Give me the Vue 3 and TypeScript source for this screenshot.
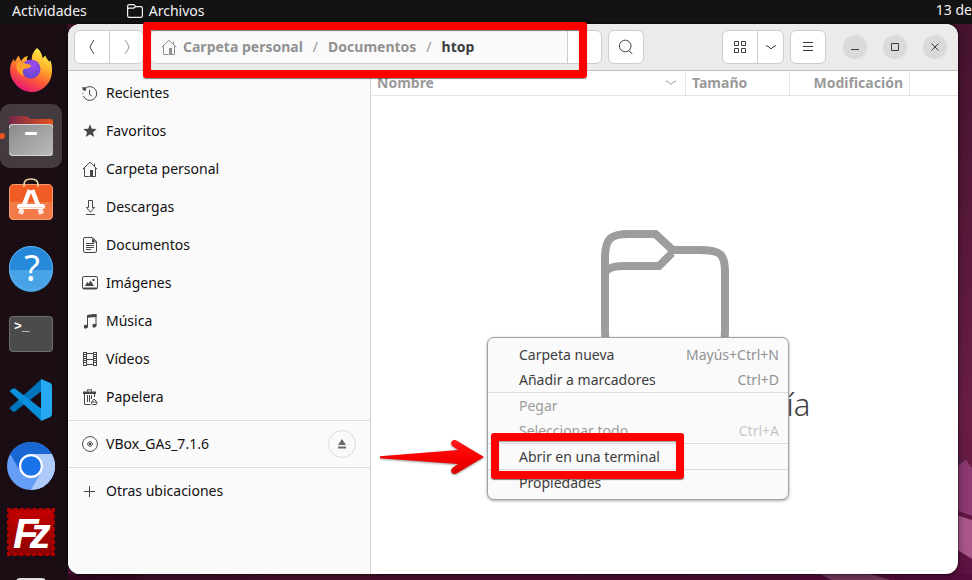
<script setup lang="ts">
interface Glyph {
  stroke?: string
  fill?: string
}

interface Place {
  label: string
  icon: string
  ejectable?: boolean
}

interface MenuEntry {
  label: string
  shortcut?: string
  disabled?: boolean
}

const homeGlyph: Glyph = {
  stroke: 'M.7 8.3 8 1.2l7.3 7.1M2.5 7v8.5h5M13.5 7v8.5h-3M12.5 5V2.5',
  fill: 'M8 9h3v7H8z',
}

const glyphs: Record<string, Glyph> = {
  recent: {
    stroke: 'M3.2 3.4A6.9 6.9 0 1 1 1.4 11M1 8.2v.9M7.5 4.8V9l2.2 2.2',
    fill: 'M.3 2l4.2.6L3.3 6.2.8 5z',
  },
  star: { fill: 'M8 1.3l1.8 4.5 4.9.3-3.8 3.1 1.3 4.8L8 11.3 3.8 14l1.3-4.8L1.3 6.1l4.9-.3z' },
  home: homeGlyph,
  download: { stroke: 'M6.5 1.5h4v7h2.1L8.5 13.2 4.4 8.5h2.1zM4 15.5h9' },
  document: {
    stroke: 'M3 .5h7.5l4 4V14q0 1.5-1.5 1.5H3q-1.5 0-1.5-1.5V2Q1.5.5 3 .5zM4 6.5h8M4 8.5h8M4 10.5h8M4 12.5h5',
    fill: 'M10 1l4.5 4.5H10z',
  },
  image: {
    stroke: 'M2 1.5h12q1.5 0 1.5 1.5v9.5q0 1.5-1.5 1.5H2q-1.5 0-1.5-1.5V3Q.5 1.5 2 1.5z',
    fill: 'M3 11l2.2-4 1.5 1.5L8.5 5.5 12 11zM10.5 4h2v2h-2zM1 12.5h14V14H1z',
  },
  music: {
    stroke: 'M5.5 13V2.5l8.5-1V12',
    fill: 'M5 2l9.5-1v3L5 4.8zM2 12.3q2-1.3 4 0v2q-2 2.3-4 .8zM10.5 11.3q2-1.3 4 0v2q-2 2.3-4 .8z',
  },
  video: {
    stroke: 'M1.5 1v14M14.5 1v14M4.5 1v14M11.5 1v14M4.5 2.5h7M4.5 8.5h7M4.5 13.5h7M1.5 1.5h3M1.5 3.5h3M1.5 5.5h3M1.5 7.5h3M1.5 9.5h3M1.5 11.5h3M1.5 14.5h3M11.5 1.5h3M11.5 3.5h3M11.5 5.5h3M11.5 7.5h3M11.5 9.5h3M11.5 11.5h3M11.5 14.5h3',
  },
  trash: {
    stroke: 'M2.5 5v10.5h6M12.5 5v3M5.5 6v7M7.5 6v7M9.5 6v4M5.5 2.5V.8h4v1.7M10.5 15.5q-1.5-.5-1-2.5h5.5q.5 2-1 2.5zM10 12.5l2-2.5 2.5 2.5',
    fill: 'M1 2.5h13V5H1z',
  },
  disc: {
    stroke: 'M8 .6a7.4 7.4 0 1 0 .01 0zM8 5.7a2.3 2.3 0 1 0 .01 0z',
    fill: 'M7 7h2v2H7z',
  },
  plus: { stroke: 'M2 8.5h11M7.5 3v11' },
}

const places: Place[] = [
  { label: 'Recientes', icon: 'recent' },
  { label: 'Favoritos', icon: 'star' },
  { label: 'Carpeta personal', icon: 'home' },
  { label: 'Descargas', icon: 'download' },
  { label: 'Documentos', icon: 'document' },
  { label: 'Imágenes', icon: 'image' },
  { label: 'Música', icon: 'music' },
  { label: 'Vídeos', icon: 'video' },
  { label: 'Papelera', icon: 'trash' },
]
const devices: Place[] = [{ label: 'VBox_GAs_7.1.6', icon: 'disc', ejectable: true }]
const others: Place[] = [{ label: 'Otras ubicaciones', icon: 'plus' }]
const placeGroups: Place[][] = [places, devices, others]

const menuGroups: MenuEntry[][] = [
  [
    { label: 'Carpeta nueva', shortcut: 'Mayús+Ctrl+N' },
    { label: 'Añadir a marcadores', shortcut: 'Ctrl+D' },
  ],
  [
    { label: 'Pegar', disabled: true },
    { label: 'Seleccionar todo', shortcut: 'Ctrl+A', disabled: true },
  ],
  [{ label: 'Abrir en una terminal' }],
  [{ label: 'Propiedades' }],
]
</script>

<template>
  <div class="desktop">
    <header class="topbar">
      <button class="topbar-btn">Actividades</button>
      <button class="topbar-btn app-menu">
        <svg width="16" height="16" viewBox="0 0 16 16" fill="none" stroke="currentColor" stroke-width="1.2">
          <path d="M2.5 1.6h4.3l2 2h5q1.6 0 1.6 1.6v7.6q0 1.6-1.6 1.6H2.2q-1.6 0-1.6-1.6V3.2q0-1.6 1.9-1.6zM.6 6q.3-.9 1.6-.9h4.6l2-1.5" />
        </svg>
        Archivos
      </button>
      <span class="clock">13 de</span>
    </header>

    <div class="workspace">
      <svg class="wallpaper" viewBox="0 0 972 556" preserveAspectRatio="none">
        <defs>
          <linearGradient id="wall" x1="0" y1="0" x2="0" y2="1">
            <stop offset="0" stop-color="#45132f" />
            <stop offset=".7" stop-color="#6a1e45" />
            <stop offset="1" stop-color="#5d1242" />
          </linearGradient>
          <linearGradient id="floor" x1="0" y1="0" x2="1" y2="0">
            <stop offset="0" stop-color="#2a0519" />
            <stop offset=".3" stop-color="#4b112f" />
            <stop offset="1" stop-color="#560d3c" />
          </linearGradient>
        </defs>
        <rect width="972" height="556" fill="url(#wall)" />
        <rect y="550" width="972" height="6" fill="url(#floor)" />
        <path d="M956 432l16 12v26l-16-10z" fill="#552052" />
        <path d="M956 443l10-7 6 8v48l-16-6z" fill="#8c3974" />
        <path d="M956 491l16 5v39l-16-10z" fill="#a9578a" />
        <path d="M820 550h50l20 6h-58z" fill="#793e62" />
        <path d="M140 550h60l15 6h-70z" fill="#42112d" />
      </svg>

      <nav class="dock" aria-label="Aplicaciones">
        <button class="dock-item" aria-label="Firefox">
          <svg width="48" height="48" viewBox="0 0 48 48">
            <defs>
              <linearGradient id="fxa" x1=".8" y1="0" x2=".3" y2="1">
                <stop offset="0" stop-color="#fff44f" />
                <stop offset=".35" stop-color="#ffb52b" />
                <stop offset=".65" stop-color="#ff5a36" />
                <stop offset="1" stop-color="#e5127f" />
              </linearGradient>
              <radialGradient id="fxb" cx=".6" cy=".3" r=".8">
                <stop offset="0" stop-color="#a04af0" />
                <stop offset="1" stop-color="#5a45c8" />
              </radialGradient>
            </defs>
            <path d="M30 2c4 3 5 7 5.5 10l3-2.5c.5 2 1.5 3.500 3.500 6l1.500-1c3 9 1.500 18-3 23.500A20 20 0 0 1 7 36C1 28 2.500 17 7 13l.5 3 4-6.500 2.500 5.500c2-3 4-4.500 7-5-1.500 2-1 4-1 5 2-1 4-1 5-1-1-5 2-9 5-12z" fill="url(#fxa)" />
            <circle cx="24" cy="23" r="9.500" fill="url(#fxb)" />
            <path d="M10 17c4-2 7 0 10 1 3 0 4 1 4 2-1 3-5 2-7 3-2 2-1 5 0 7-5-1-9-7-7-13z" fill="#ffa12d" />
          </svg>
        </button>
        <button class="dock-item active" aria-label="Archivos">
          <svg width="48" height="48" viewBox="0 0 48 48">
            <defs>
              <linearGradient id="fla"><stop offset="0" stop-color="#742848" /><stop offset="1" stop-color="#e9541f" /></linearGradient>
              <linearGradient id="flb" x1="0" y1="0" x2="1" y2="1"><stop offset="0" stop-color="#8b8a8b" /><stop offset="1" stop-color="#bcbbbc" /></linearGradient>
            </defs>
            <path d="M2 20V7q0-3 3-3h14q1 0 2 1l2 2h20q3 0 3 3v12z" fill="url(#fla)" />
            <rect x="2" y="12" width="44" height="32" rx="3" fill="url(#flb)" />
            <path d="M2.5 16v-1q0-2.5 2.5-2.5h38q2.5 0 2.500 2.500v1M3 41q0 2.500 3 2.500h36q3 0 3-2.500" fill="none" stroke="#d5d4d5" />
            <rect x="18" y="20" width="12" height="3" rx="1" fill="#fff" />
          </svg>
        </button>
        <button class="dock-item" aria-label="Software de Ubuntu">
          <svg width="48" height="48" viewBox="0 0 48 48">
            <rect x="2" y="6" width="44" height="36" rx="5" fill="#f05c24" />
            <path d="M2 24h44v13q0 5-5 5H7q-5 0-5-5z" fill="#f27a49" />
            <rect x="2.5" y="6.5" width="43" height="35" rx="4.500" fill="none" stroke="#f79972" />
            <path d="M17 9V6.500q0-5.500 7-5.500t7 5.500V9" fill="none" stroke="#f3d9a3" stroke-width="1.500" />
            <g stroke="#fff" fill="none">
              <path d="M22.800 12l-5.800 15" stroke-width="4.500" />
              <path d="M25.200 12l5.800 15" stroke-width="4.500" />
              <path d="M15 31l-1.500 5M33 31l1.500 5" stroke-width="5" stroke="#fce5dc" />
              <path d="M12.500 28.500h23" stroke-width="5" stroke-linecap="round" />
            </g>
            <path d="M12 29.500h24" stroke="#f8d4c5" />
          </svg>
        </button>
        <button class="dock-item" aria-label="Ayuda">
          <svg width="48" height="48" viewBox="0 0 48 48">
            <circle cx="24" cy="24" r="22" fill="#2588d8" />
            <path d="M2 26h44a22 22 0 0 1-44 0z" fill="#47a3e6" />
            <circle cx="24" cy="24" r="21.500" fill="none" stroke="#5ab0ee" />
            <text class="help-mark" x="25" y="37" text-anchor="middle">?</text>
          </svg>
        </button>
        <button class="dock-item" aria-label="Terminal">
          <svg width="48" height="48" viewBox="0 0 48 48">
            <rect x="2" y="6" width="44" height="36" rx="4" fill="#4b4b4b" />
            <rect x="2.5" y="6.5" width="43" height="35" rx="3.500" fill="none" stroke="#6e6e6e" />
            <text class="prompt-mark" x="7" y="20">&gt;_</text>
          </svg>
        </button>
        <button class="dock-item" aria-label="Visual Studio Code">
          <svg width="48" height="48" viewBox="0 0 48 48">
            <path d="M3 31.500L34 3.500v12L8 35.500q-1 .5-2 0l-3-2.500q-.8-.7 0-1.500z" fill="#0074ba" />
            <path d="M3 15.500L34 44.500v-12L8 12.500q-1-.5-2 0l-3 2q-.8.500 0 1z" fill="#0a8fdc" />
            <path d="M34 3l9.500 4q1.500 1 1.500 3v28q0 2-1.500 3L34 45z" fill="#27a8f2" />
          </svg>
        </button>
        <button class="dock-item" aria-label="Chromium">
          <svg width="48" height="48" viewBox="0 0 48 48">
            <circle cx="24" cy="24" r="24" fill="#669df6" />
            <path d="M24 0a24 24 0 0 1 20.800 12H24a12 12 0 0 0-10.400 18L3.200 12A24 24 0 0 1 24 0z" fill="#1967d2" />
            <path d="M24 12h20.800A24 24 0 0 1 24 48l10.400-18A12 12 0 0 0 24 12z" fill="#aecbfa" />
            <circle cx="24" cy="24" r="12" fill="#fff" />
            <circle cx="24" cy="24" r="9.800" fill="#1a73e8" />
          </svg>
        </button>
        <button class="dock-item" aria-label="FileZilla">
          <svg width="48" height="48" viewBox="0 0 48 48">
            <defs>
              <linearGradient id="fz" x1="0" y1="0" x2="0" y2="1"><stop offset="0" stop-color="#c40000" /><stop offset="1" stop-color="#8d0000" /></linearGradient>
            </defs>
            <rect x="1.5" y="1.5" width="45" height="45" fill="url(#fz)" />
            <rect x="1.5" y="1.5" width="45" height="45" fill="none" stroke="#b00000" stroke-width="3.500" stroke-linecap="round" stroke-dasharray="1.500 4.900" />
            <text class="fz-mark" x="6" y="40">F<tspan dx="-9">z</tspan></text>
          </svg>
        </button>
        <button class="dock-item" aria-label="Editor de textos">
          <svg width="48" height="48" viewBox="0 0 48 48">
            <rect x="9" y="4" width="30" height="40" rx="4" fill="#dedede" />
          </svg>
        </button>
      </nav>

      <main class="window">
        <header class="headerbar">
          <div class="linked nav-buttons">
            <button class="tool" aria-label="Atrás">
              <svg width="16" height="16" viewBox="0 0 16 16"><path d="M10 1Q7 5 6 8q1 3 4 7" /></svg>
            </button>
            <button class="tool dim" aria-label="Adelante">
              <svg width="16" height="16" viewBox="0 0 16 16"><path d="M6 1q3 4 4 7-1 3-4 7" /></svg>
            </button>
          </div>
          <div class="linked pathbar">
            <nav class="crumbs" aria-label="Ruta">
              <a href="#" class="crumb">
                <svg width="16" height="16" viewBox="0 0 16 16">
                  <path :d="homeGlyph.stroke" /><path class="solid" :d="homeGlyph.fill" />
                </svg>
                Carpeta personal
              </a>
              <span class="slash">/</span>
              <a href="#" class="crumb">Documentos</a>
              <span class="slash">/</span>
              <a href="#" class="crumb current">htop</a>
            </nav>
            <button class="tool" aria-label="Opciones de la carpeta"></button>
          </div>
          <button class="tool single" aria-label="Buscar">
            <svg width="16" height="16" viewBox="0 0 16 16"><path d="M7.2 1.2a5.8 5.8 0 1 0 .01 0zM11 12l3.300 2.600" /></svg>
          </button>
          <span class="spacer"></span>
          <div class="linked view-buttons">
            <button class="tool" aria-label="Vista de cuadrícula">
              <svg width="16" height="16" viewBox="0 0 16 16"><path d="M2.5 2.5h4v4h-4zM9.500 2.500h4v4h-4zM2.500 9.500h4v4h-4zM9.500 9.500h4v4h-4z" /></svg>
            </button>
            <button class="tool narrow" aria-label="Opciones de vista">
              <svg width="12" height="16" viewBox="0 0 12 16"><path d="M1 6.500q3.500 1.200 5 3.500 1.500-2.300 5-3.500" /></svg>
            </button>
          </div>
          <button class="tool single" aria-label="Menú">
            <svg width="16" height="16" viewBox="0 0 16 16"><path d="M3 3.500h10M3 7.500h10M3 11.500h10" /></svg>
          </button>
          <div class="window-controls">
            <button class="wm" aria-label="Minimizar"><svg width="16" height="16" viewBox="0 0 16 16"><path d="M4 10.500h8" /></svg></button>
            <button class="wm" aria-label="Maximizar"><svg width="16" height="16" viewBox="0 0 16 16"><path d="M4.500 4.500h7v7h-7z" /></svg></button>
            <button class="wm" aria-label="Cerrar"><svg width="16" height="16" viewBox="0 0 16 16"><path d="M4.500 4.500l7 7M11.500 4.500l-7 7" /></svg></button>
          </div>
        </header>

        <div class="body">
          <aside class="sidebar">
            <ul v-for="(group, g) in placeGroups" :key="g" class="places">
              <li v-for="place in group" :key="place.label" class="place">
                <a href="#" class="place-link">
                  <svg width="16" height="16" viewBox="0 0 16 16">
                    <path v-if="glyphs[place.icon].stroke" :d="glyphs[place.icon].stroke" />
                    <path v-if="glyphs[place.icon].fill" class="solid" :d="glyphs[place.icon].fill" />
                  </svg>
                  {{ place.label }}
                </a>
                <button v-if="place.ejectable" class="eject" aria-label="Expulsar">
                  <svg width="10" height="10" viewBox="0 0 10 10"><path d="M5 0l4 6H1zM1 7.500h8v2H1z" /></svg>
                </button>
              </li>
            </ul>
          </aside>

          <section class="content">
            <table class="columns">
              <thead>
                <tr>
                  <th class="col-name">
                    <span class="sortable">
                      Nombre
                      <svg width="12" height="8" viewBox="0 0 12 8"><path d="M1 2q3.500 1 5 3.500Q7.500 3 11 2" /></svg>
                    </span>
                  </th>
                  <th class="col-size">Tamaño</th>
                  <th class="col-date">Modificación</th>
                  <th class="col-rest"></th>
                </tr>
              </thead>
            </table>
            <div class="empty">
              <svg width="128" height="128" viewBox="0 0 128 128" fill="none" stroke="#9d9d9d" stroke-width="8">
                <path d="M54.500 4H28C10 4 4 8 4 28v72c0 20 4 24 20 24h80c16 0 20-4 20-24V42c0-18-4-22-26-22H71.500z" />
                <path d="M4 43c2-5 8-7 20-7h34l13-13" />
              </svg>
              <p class="empty-title">La carpeta está vacía</p>
            </div>
          </section>
        </div>

        <div class="context-menu" role="menu">
          <div v-for="(group, g) in menuGroups" :key="g" class="menu-group">
            <button v-for="entry in group" :key="entry.label" class="menu-item" role="menuitem" :disabled="entry.disabled">
              <span>{{ entry.label }}</span>
              <kbd v-if="entry.shortcut">{{ entry.shortcut }}</kbd>
            </button>
          </div>
        </div>

        <div class="marker marker-path"></div>
        <div class="marker marker-terminal"></div>
        <svg class="arrow" width="106" height="38" viewBox="0 0 106 38">
          <defs>
            <linearGradient id="arrowfill" x1="0" y1="0" x2="0" y2="1"><stop offset="0" stop-color="#ff1a1a" /><stop offset=".5" stop-color="#f80000" /><stop offset="1" stop-color="#d80000" /></linearGradient>
          </defs>
          <path d="M1 18.200l78-6.200-5-3.500c-4-3-1-7.500 3-6.200L105 19 77 35.700c-4 1.300-7-3.200-3-6.200l5-3.500L1 20.200z" fill="url(#arrowfill)" />
        </svg>
      </main>
    </div>
  </div>
</template>

<style>
body {
  margin: 0;
}
</style>

<style scoped>
.desktop {
  display: flex;
  flex-direction: column;
  height: 100vh;
  overflow: hidden;
  font-family: "Noto Sans", "Open Sans", sans-serif;
  font-size: 14px;
  line-height: 20px;
  color: #111;
  background: #131313;
}

button {
  margin: 0;
  padding: 0;
  border: 0;
  background: none;
  font: inherit;
  color: inherit;
}

a {
  color: inherit;
  text-decoration: none;
}

svg {
  display: block;
  flex: none;
}

.topbar {
  display: flex;
  align-items: center;
  flex: none;
  height: 24px;
  padding-left: 12px;
  overflow: hidden;
  color: #f2f2f2;
  white-space: nowrap;
}

.topbar-btn {
  height: 20px;
  margin-bottom: 2px;
}

.app-menu {
  display: flex;
  align-items: center;
  gap: 6px;
  margin-left: 40px;
}

.clock {
  margin-left: auto;
  margin-bottom: 4px;
}

.workspace {
  position: relative;
  display: flex;
  flex: 1;
  min-height: 0;
}

.wallpaper {
  position: absolute;
  inset: 0;
  width: 100%;
  height: 100%;
}

.dock {
  position: relative;
  display: flex;
  flex-direction: column;
  flex: none;
  gap: 2px;
  width: 68px;
  padding-top: 14px;
  box-sizing: border-box;
  overflow: hidden;
  background: #1a0e14;
}

.dock-item {
  display: flex;
  align-items: center;
  justify-content: center;
  flex: none;
  width: 62px;
  height: 64px;
}

.dock-item.active {
  position: relative;
  border-radius: 10px;
  background: #433b40;
}

.dock-item.active::before {
  content: "";
  position: absolute;
  left: -1px;
  top: 29px;
  width: 6px;
  height: 6px;
  border-radius: 50%;
  background: #e95420;
}

.help-mark {
  font: 36px "Noto Sans", sans-serif;
  fill: #fff;
}

.prompt-mark {
  font: bold 13px "Liberation Mono", monospace;
  fill: #fff;
}

.fz-mark {
  font: italic bold 42px "Liberation Sans", sans-serif;
  fill: #fff;
}

.window {
  position: relative;
  display: flex;
  flex-direction: column;
  flex: 1;
  min-width: 0;
  margin: 0 14px 6px 0;
  border-radius: 12px;
  background: #fff;
  box-shadow: 0 0 0 1px rgba(0, 0, 0, 0.3), 0 2px 8px rgba(0, 0, 0, 0.45);
}

.headerbar {
  display: flex;
  align-items: center;
  flex: none;
  gap: 6px;
  height: 47px;
  padding: 0 11px 0 6px;
  box-sizing: border-box;
  border-bottom: 1px solid #bfbfbf;
  border-radius: 12px 12px 0 0;
  background: #ebebeb;
  color: #3d3d3d;
}

.headerbar svg,
.sidebar svg,
.sortable svg {
  fill: none;
  stroke: currentColor;
}

.headerbar .solid,
.sidebar .solid {
  fill: currentColor;
  stroke: none;
}

.linked {
  display: flex;
  flex: none;
  box-sizing: border-box;
  height: 34px;
  border: 1px solid #cdcdcd;
  border-radius: 6px;
  overflow: hidden;
  background: #fff;
}

.tool {
  display: flex;
  align-items: center;
  justify-content: center;
  flex: none;
  width: 34px;
  height: 32px;
}

.linked .tool + .tool,
.crumbs + .tool {
  border-left: 1px solid #cdcdcd;
}

.tool.narrow {
  width: 26px;
}

.tool.single {
  width: 36px;
  height: 34px;
  border: 1px solid #cdcdcd;
  border-radius: 6px;
  background: #fff;
}

.tool.dim {
  color: #929292;
}

.pathbar {
  flex: 0 1 452px;
  min-width: 0;
}

.crumbs {
  display: flex;
  align-items: center;
  flex: 1;
  gap: 10px;
  min-width: 0;
  padding-left: 10px;
  overflow: hidden;
  background: #fafafa;
  color: #929292;
  font-weight: bold;
  white-space: nowrap;
}

.crumb {
  display: flex;
  align-items: center;
  gap: 6px;
}

.crumb.current {
  color: #3d3d3d;
}

.slash {
  font-weight: normal;
}

.spacer {
  flex: 1;
}

.window-controls {
  display: flex;
  gap: 16px;
  margin-left: 11px;
}

.wm {
  display: flex;
  align-items: center;
  justify-content: center;
  width: 24px;
  height: 24px;
  border-radius: 50%;
  background: #dadada;
}

.body {
  display: flex;
  flex: 1;
  min-height: 0;
}

.sidebar {
  flex: none;
  width: 303px;
  box-sizing: border-box;
  padding-top: 3px;
  border-right: 1px solid #d5d5d5;
  border-radius: 0 0 0 12px;
  background: #fafafa;
}

.places {
  margin: 0;
  padding: 0;
  list-style: none;
}

.places + .places {
  margin-top: 4px;
  padding-top: 4px;
  border-top: 1px solid #dcdcdc;
}

.place {
  display: flex;
  align-items: center;
  height: 38px;
  padding: 0 14px;
}

.place-link {
  display: flex;
  align-items: center;
  flex: 1;
  gap: 8px;
}

.place-link svg {
  color: #464646;
}

.eject {
  display: flex;
  align-items: center;
  justify-content: center;
  width: 28px;
  height: 28px;
  border: 1px solid #dcdcdc;
  border-radius: 50%;
}

.sidebar .eject svg {
  fill: #6b6b6b;
  stroke: none;
}

.content {
  display: flex;
  flex-direction: column;
  flex: 1;
  min-width: 0;
}

.columns {
  width: 100%;
  border-collapse: separate;
  border-spacing: 0;
  table-layout: fixed;
  color: #9a9a9a;
}

.columns th {
  box-sizing: border-box;
  height: 25px;
  padding: 0 6px;
  border-right: 1px solid #e4e4e4;
  border-bottom: 1px solid #e4e4e4;
  text-align: left;
}

.columns .col-size {
  width: 104px;
}

.columns .col-date {
  width: 120px;
  text-align: right;
}

.columns .col-rest {
  width: 48px;
  border-right: 0;
}

.sortable {
  display: flex;
  align-items: center;
  justify-content: space-between;
  padding-right: 2px;
}

.empty {
  display: flex;
  flex-direction: column;
  align-items: center;
  justify-content: center;
  flex: 1;
  padding-bottom: 16px;
}

.empty-title {
  margin: 26px 0 0;
  color: #3d3d3d;
  font-size: 31px;
  font-weight: 300;
  line-height: 40px;
  white-space: nowrap;
}

.context-menu {
  position: absolute;
  left: 419px;
  top: 313px;
  width: 302px;
  box-sizing: border-box;
  padding: 4px 0;
  border: 1px solid #a0a0a0;
  border-radius: 7px;
  background: #fafafa;
  box-shadow: 0 1px 3px rgba(0, 0, 0, 0.35);
  color: #3d3d3d;
}

.menu-group + .menu-group {
  border-top: 1px solid #dcdcdc;
}

.menu-item {
  display: flex;
  align-items: center;
  justify-content: space-between;
  width: 100%;
  height: 25px;
  padding: 0 9px 0 31px;
}

.menu-item kbd {
  font: inherit;
  color: #929292;
}

.menu-item:disabled {
  color: #9c9c9c;
}

.menu-item:disabled kbd {
  color: #c6c6c6;
}

.marker {
  position: absolute;
  box-sizing: border-box;
  border: 8px solid #f00;
  border-radius: 3px;
  box-shadow: 0 1px 1px rgba(0, 0, 0, 0.5), inset 0 1px 1px rgba(0, 0, 0, 0.4);
}

.marker-path {
  left: 75px;
  top: -2px;
  width: 444px;
  height: 56px;
}

.marker-terminal {
  left: 423px;
  top: 409px;
  width: 193px;
  height: 46px;
}

.arrow {
  position: absolute;
  left: 311px;
  top: 414px;
  filter: drop-shadow(0 1px 1px rgba(0, 0, 0, 0.4));
}
</style>
